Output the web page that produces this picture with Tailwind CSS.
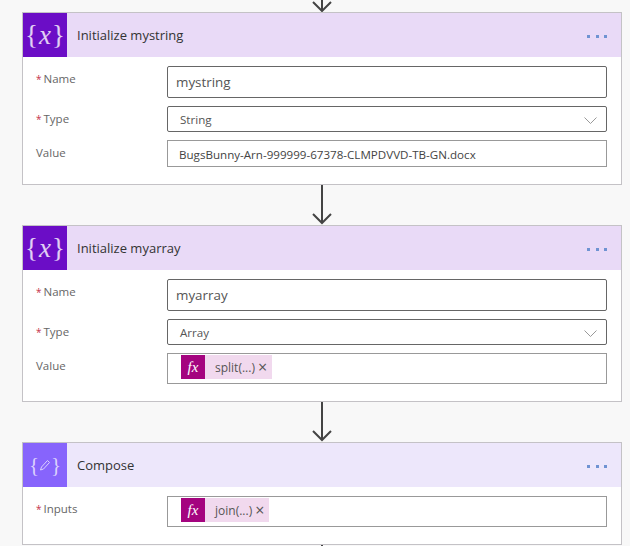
<!DOCTYPE html>
<html lang="en">
<head>
    <meta charset="UTF-8">
    <title>Flow</title>
    <script src="https://cdn.jsdelivr.net/npm/@tailwindcss/browser@4"></script>
</head>
<body class="bg-[#f8f8f8] h-[546px] w-[630px] overflow-hidden font-['Open_Sans',sans-serif] text-[#444]">
<div class="w-[600px] ml-[22px] flex flex-col">

    <!-- top connector -->
    <div class="h-[12px] overflow-hidden flex justify-center">
        <svg width="24" height="12" viewBox="0 0 24 12" fill="none" stroke="#444" stroke-width="2"><path d="M12 0V10.5M3 2l9 9 9-9"/></svg>
    </div>

    <!-- Initialize mystring -->
    <div class="h-[173px] bg-white border border-[#c4c2c6]">
        <div class="h-[44px] bg-[#e9daf7] flex items-center">
            <div class="w-[44px] h-[44px] bg-[#6b0dc6] text-white/80 flex items-center justify-center font-['Liberation_Serif',serif]">
                <span class="text-[27px] font-light leading-none">{</span><span class="text-[27px] italic leading-none mx-[1px]">x</span><span class="text-[27px] font-light leading-none">}</span>
            </div>
            <span class="ml-[10px] mt-[1px] text-[13px] text-[#333]">Initialize mystring</span>
            <div class="ml-auto mr-[14px] mt-[2px] flex gap-[5.5px]">
                <i class="w-[3px] h-[3px] bg-[#6f93d2]"></i><i class="w-[3px] h-[3px] bg-[#6f93d2]"></i><i class="w-[3px] h-[3px] bg-[#6f93d2]"></i>
            </div>
        </div>
        <div class="pl-[13px] pr-[14px] pt-[9px] flex flex-col gap-[8px]">
            <div class="flex">
                <div class="w-[131px] pt-[4px] text-[11.5px] text-[#666]"><span class="text-[#c4314b] text-[10px] mr-[2px]">*</span>Name</div>
                <div class="flex-1 h-[32px] border border-[#666] rounded-[2px] px-[8px] pt-[1px] flex items-center text-[13.4px] text-[#555]">mystring</div>
            </div>
            <div class="flex">
                <div class="w-[131px] pt-[4px] text-[11.5px] text-[#666]"><span class="text-[#c4314b] text-[10px] mr-[2px]">*</span>Type</div>
                <div class="flex-1 h-[26px] border border-[#666] rounded-[2px] pl-[12px] pr-[9px] pt-[2px] flex items-center justify-between text-[11.6px] text-[#555]">
                    <span>String</span>
                    <svg width="13" height="7" viewBox="0 0 13 7" fill="none" stroke="#999"><path d="M.5.5l6 6 6-6"/></svg>
                </div>
            </div>
            <div class="flex">
                <div class="w-[131px] pt-[4px] text-[11.5px] text-[#666]">Value</div>
                <div class="flex-1 h-[27px] border border-[#999] pl-[11px] pr-[8px] pt-[2px] flex items-center text-[11.6px] text-[#444]">BugsBunny-Arn-999999-67378-CLMPDVVD-TB-GN.docx</div>
            </div>
        </div>
    </div>

    <!-- connector -->
    <div class="h-[40px] flex justify-center">
        <svg width="24" height="40" viewBox="0 0 24 40" fill="none" stroke="#444" stroke-width="2"><path d="M12 0V38M3 29l9 9 9-9"/></svg>
    </div>

    <!-- Initialize myarray -->
    <div class="h-[177px] bg-white border border-[#c4c2c6]">
        <div class="h-[44px] bg-[#e9daf7] flex items-center">
            <div class="w-[44px] h-[44px] bg-[#6b0dc6] text-white/80 flex items-center justify-center font-['Liberation_Serif',serif]">
                <span class="text-[27px] font-light leading-none">{</span><span class="text-[27px] italic leading-none mx-[1px]">x</span><span class="text-[27px] font-light leading-none">}</span>
            </div>
            <span class="ml-[10px] mt-[1px] text-[13px] text-[#333]">Initialize myarray</span>
            <div class="ml-auto mr-[14px] mt-[2px] flex gap-[5.5px]">
                <i class="w-[3px] h-[3px] bg-[#6f93d2]"></i><i class="w-[3px] h-[3px] bg-[#6f93d2]"></i><i class="w-[3px] h-[3px] bg-[#6f93d2]"></i>
            </div>
        </div>
        <div class="pl-[13px] pr-[14px] pt-[9px] flex flex-col gap-[8px]">
            <div class="flex">
                <div class="w-[131px] pt-[4px] text-[11.5px] text-[#666]"><span class="text-[#c4314b] text-[10px] mr-[2px]">*</span>Name</div>
                <div class="flex-1 h-[32px] border border-[#666] rounded-[2px] px-[8px] pt-[1px] flex items-center text-[13.4px] text-[#555]">myarray</div>
            </div>
            <div class="flex">
                <div class="w-[131px] pt-[4px] text-[11.5px] text-[#666]"><span class="text-[#c4314b] text-[10px] mr-[2px]">*</span>Type</div>
                <div class="flex-1 h-[26px] border border-[#666] rounded-[2px] pl-[12px] pr-[9px] pt-[2px] flex items-center justify-between text-[11.6px] text-[#555]">
                    <span>Array</span>
                    <svg width="13" height="7" viewBox="0 0 13 7" fill="none" stroke="#999"><path d="M.5.5l6 6 6-6"/></svg>
                </div>
            </div>
            <div class="flex">
                <div class="w-[131px] pt-[4px] text-[11.5px] text-[#666]">Value</div>
                <div class="flex-1 h-[31px] border border-[#999] pl-[13px] pt-[1px] flex items-start">
                    <div class="h-[24px] w-[91px] bg-[#f1d9ee] flex items-center text-[12px] text-[#555]">
                        <span class="w-[24px] h-[24px] bg-[#a4047f] text-white flex items-center justify-center font-['Liberation_Serif',serif] italic text-[15px]">fx</span>
                        <span class="ml-[10px] mt-[1px]">split(...)</span>
                        <span class="ml-[3px] text-[16px] leading-none">×</span>
                    </div>
                </div>
            </div>
        </div>
    </div>

    <!-- connector -->
    <div class="h-[40px] flex justify-center">
        <svg width="24" height="40" viewBox="0 0 24 40" fill="none" stroke="#444" stroke-width="2"><path d="M12 0V38M3 29l9 9 9-9"/></svg>
    </div>

    <!-- Compose -->
    <div class="h-[103px] bg-white border border-[#c4c2c6]">
        <div class="h-[44px] bg-[#ede7fb] flex items-center">
            <div class="w-[44px] h-[44px] bg-[#8764fc] text-[#dcd2fd] flex items-center justify-center font-['Liberation_Serif',serif]">
                <span class="text-[21px] leading-none">{</span>
                <svg width="12" height="12" viewBox="0 0 12 12" fill="none" stroke="#dcd2fd"><path d="M8.5 1.5l2 2-6 6.5-3 1 1-3z"/></svg>
                <span class="text-[21px] leading-none">}</span>
            </div>
            <span class="ml-[10px] mt-[1px] text-[13px] text-[#333]">Compose</span>
            <div class="ml-auto mr-[14px] mt-[2px] flex gap-[5.5px]">
                <i class="w-[3px] h-[3px] bg-[#6f93d2]"></i><i class="w-[3px] h-[3px] bg-[#6f93d2]"></i><i class="w-[3px] h-[3px] bg-[#6f93d2]"></i>
            </div>
        </div>
        <div class="pl-[13px] pr-[14px] pt-[9px] flex">
            <div class="w-[131px] pt-[4px] text-[11.5px] text-[#666]"><span class="text-[#c4314b] text-[10px] mr-[2px]">*</span>Inputs</div>
            <div class="flex-1 h-[31px] border border-[#999] pl-[13px] pt-[1px] flex items-start">
                <div class="h-[24px] w-[88px] bg-[#f1d9ee] flex items-center text-[12px] text-[#555]">
                    <span class="w-[24px] h-[24px] bg-[#a4047f] text-white flex items-center justify-center font-['Liberation_Serif',serif] italic text-[15px]">fx</span>
                    <span class="ml-[10px] mt-[1px]">join(...)</span>
                    <span class="ml-[3px] text-[16px] leading-none">×</span>
                </div>
            </div>
        </div>
    </div>

    <!-- bottom connector -->
    <div class="h-[2px] flex justify-center"><div class="w-[2px] h-[2px] bg-[#444]"></div></div>
</div>
</body>
</html>
